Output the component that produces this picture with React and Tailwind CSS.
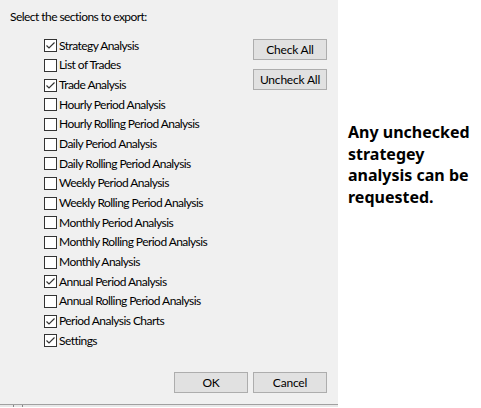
const sections = [
  ['Strategy Analysis', true],
  ['List of Trades', false],
  ['Trade Analysis', true],
  ['Hourly Period Analysis', false],
  ['Hourly Rolling Period Analysis', false],
  ['Daily Period Analysis', false],
  ['Daily Rolling Period Analysis', false],
  ['Weekly Period Analysis', false],
  ['Weekly Rolling Period Analysis', false],
  ['Monthly Period Analysis', false],
  ['Monthly Rolling Period Analysis', false],
  ['Monthly Analysis', false],
  ['Annual Period Analysis', true],
  ['Annual Rolling Period Analysis', false],
  ['Period Analysis Charts', true],
  ['Settings', true],
]

function Box({ checked }) {
  return (
    <span className="flex h-[13px] w-[13px] shrink-0 items-center justify-center border border-[#333333] bg-white">
      {checked ? (
        <svg width="11" height="11" viewBox="0 0 11 11">
          <path d="M1.5 5.5 L4 8 L9.5 2.5" fill="none" stroke="#333" strokeWidth="1.2" />
        </svg>
      ) : null}
    </span>
  )
}

function WinButton({ children }) {
  return (
    <button
      type="button"
      className="flex h-[21px] w-[74px] items-center justify-center border border-[#adadad] bg-[#e1e1e1] text-[12px] tracking-[-0.2px] text-black"
    >
      {children}
    </button>
  )
}

export default function App() {
  return (
    <div className="flex h-[408px] w-[481px] bg-white font-['Lato',sans-serif]">
      <div className="flex w-[338px] flex-col">
        <div className="flex h-[405px] flex-col border-b border-[#a0a0a0] bg-[#f0f0f0] text-[12px] tracking-[-0.55px] text-black">
          <p className="pl-[10px] pt-[9px] leading-[16px]">Select the sections to export:</p>
          <div className="mt-[11px] flex">
            <ul className="flex w-[253px] flex-col pl-[44px]">
              {sections.map(([label, on]) => (
                <li key={label} className="flex h-[19.67px] items-center gap-[2px] whitespace-nowrap">
                  <Box checked={on} />
                  <span className="leading-none">{label}</span>
                </li>
              ))}
            </ul>
            <div className="flex flex-col gap-[9px] pt-[3px]">
              <WinButton>Check All</WinButton>
              <WinButton>Uncheck All</WinButton>
            </div>
          </div>
          <div className="mt-auto mb-[11px] flex justify-end gap-[5px] pr-[11px]">
            <WinButton>OK</WinButton>
            <WinButton>Cancel</WinButton>
          </div>
        </div>
        <div className="flex h-[2px] bg-[#e8e8e8]">
          <span className="ml-[13px] h-full w-px bg-[#888]" />
          <span className="ml-[8px] h-full w-px bg-[#888]" />
        </div>
      </div>
      <div className="flex items-start pl-[10px] pt-[122px]">
        <p className="w-[125px] font-['Noto_Sans',sans-serif] text-[16px] font-bold leading-[21.5px] text-black">
          Any unchecked strategey analysis can be requested.
        </p>
      </div>
    </div>
  )
}
